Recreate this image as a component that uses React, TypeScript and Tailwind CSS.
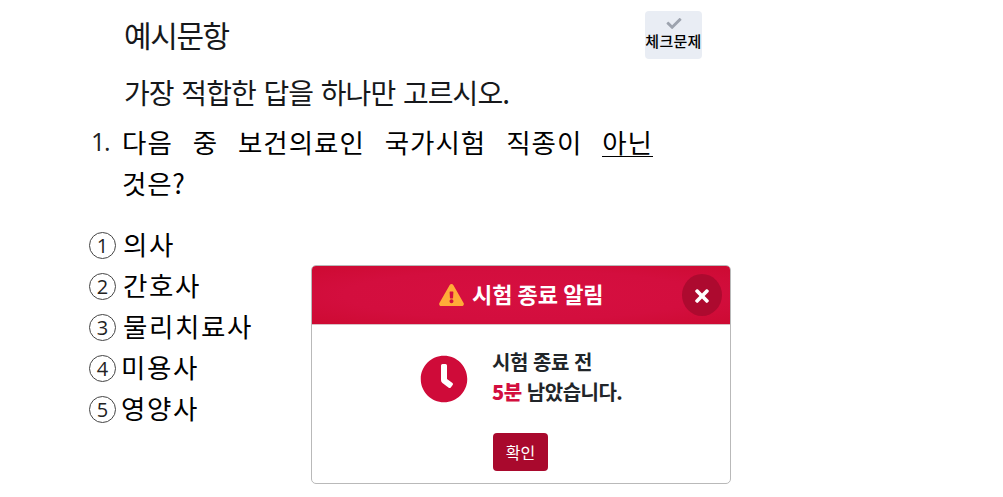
import React from "react";
import { FaCheck, FaClock, FaExclamationTriangle, FaTimes } from "react-icons/fa";

interface Ichoice {
  id: number;
  label: string;
  shift: string;
}

const words: string[] = ["다음", "중", "보건의료인", "국가시험", "직종이"];

const choices: Ichoice[] = [
  { id: 1, label: "의사", shift: "pl-[7px]" },
  { id: 2, label: "간호사", shift: "pl-[7px]" },
  { id: 3, label: "물리치료사", shift: "pl-[7px]" },
  { id: 4, label: "미용사", shift: "pl-[5px]" },
  { id: 5, label: "영양사", shift: "pl-[5px]" },
];

function Question() {
  return (
    <div className="w-[653px]">
      <div className="flex h-[41px] text-[26.5px] leading-[41px] tracking-[1px] text-black">
        <span className="ml-[91px] w-[31px] shrink-0 font-['Open_Sans'] text-[25px] tracking-[-1.2px] text-[#222]">
          1.
        </span>
        <p className="flex flex-1 justify-between whitespace-nowrap">
          {words.map((word) => (
            <span key={word}>{word}</span>
          ))}
          <span className="h-[36px] border-b border-black">아닌</span>
        </p>
      </div>
      <p className="pl-[122px] text-[26.5px] leading-[41px] tracking-[0.8px] text-black">
        것은?
      </p>
    </div>
  );
}

function TimeAlert() {
  return (
    <div className="absolute left-[311px] top-[265px] h-[219px] w-[420px] overflow-hidden rounded-[5px] border border-[#b9b9b9] bg-white">
      <div className="relative flex h-[59px] items-center border-b border-[#d8bfc5] bg-[radial-gradient(ellipse_at_center,#d60f40_0%,#d30e3e_60%,#cd0a32_100%)] pl-[127px] text-white">
        <FaExclamationTriangle className="h-[22px] w-[25px] text-[#ffab38]" />
        <h2 className="mb-[5px] ml-[8px] whitespace-nowrap text-[22px] font-bold leading-[30px] tracking-[-0.1px] [word-spacing:0.4px]">
          시험 종료 알림
        </h2>
        <button className="absolute right-[8px] top-[8px] flex h-[42px] w-[40px] items-center justify-center rounded-[50%] bg-[#ad0a2f]">
          <FaTimes className="mt-[2px] size-[20px]" />
        </button>
      </div>
      <div className="flex pl-[108px] pt-[22px]">
        <FaClock className="mt-[8px] size-[48px] text-[#cf0b39]" />
        <div className="ml-[24px]">
          <p className="whitespace-nowrap text-[20px] font-bold leading-[30px] tracking-[-0.5px] text-[#212529] [word-spacing:1.2px]">
            시험 종료 전
            <br />
            <span className="font-black text-[#d30e3e]">5분</span> 남았습니다.
          </p>
          <button className="ml-[1px] mt-[26px] block h-[38px] w-[55px] rounded-[4px] bg-[#a9092d] text-[16px] leading-[37px] text-white">
            확인
          </button>
        </div>
      </div>
    </div>
  );
}

export default function App() {
  return (
    <div className="relative h-[497px] w-[1003px] overflow-hidden bg-white font-['Noto_Sans_CJK_KR',sans-serif]">
      <div className="flex h-[71px] w-[702px] justify-between pl-[124px]">
        <h1 className="pt-[13px] text-[30px] leading-[42px] tracking-[-1.4px] text-[#16181b]">
          예시문항
        </h1>
        <button className="mt-[11px] flex h-[48px] w-[57px] flex-col items-center rounded-[4px] bg-[#e9edf4] pt-[5px]">
          <FaCheck className="h-[15px] w-[16px] text-[#9da3ae]" />
          <span className="-mt-px whitespace-nowrap text-[15px] font-medium leading-[22px] tracking-[0.3px] text-black">
            체크문제
          </span>
        </button>
      </div>
      <p className="h-[50px] whitespace-nowrap pl-[124px] text-[28px] leading-[42px] tracking-[-0.9px] text-[#16181b] [word-spacing:2.2px]">
        가장 적합한 답을 하나만 고르시오.
      </p>
      <Question />
      <ul className="pl-[89px] pt-[22px]">
        {choices.map((data) => (
          <li key={data.id} className="flex h-[41px] items-center">
            <span className="flex size-[27px] items-center justify-center rounded-full border border-[#444] pt-px font-['Open_Sans'] text-[20px] text-[#222]">
              {data.id}
            </span>
            <span className={`${data.shift} mb-[4px] text-[26.5px] leading-[37px] tracking-[1.6px] text-black`}>
              {data.label}
            </span>
          </li>
        ))}
      </ul>
      <TimeAlert />
    </div>
  );
}
